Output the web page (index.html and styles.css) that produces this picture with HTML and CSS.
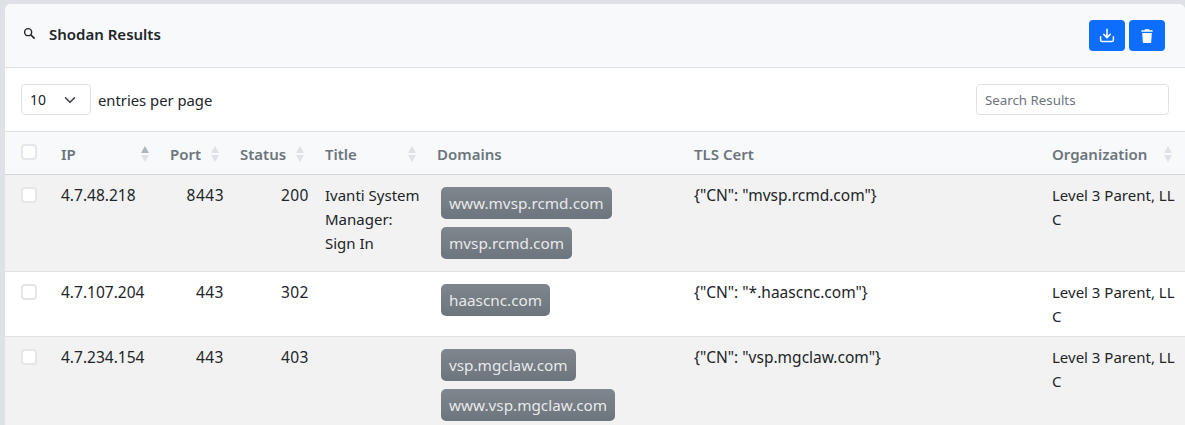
FILE: index.html
```html
<!DOCTYPE html>
<html lang="en">
<head>
<meta charset="utf-8">
<title>Shodan Results</title>
<link rel="stylesheet" href="styles.css">
</head>
<body>
<div class="card">
  <header class="card-header">
    <div class="card-title">
      <svg class="search-icon" viewBox="0 0 24 24" width="13" height="13"><circle cx="9.5" cy="9.5" r="6.5" fill="none" stroke="#212529" stroke-width="2.6"/><path d="M14.5 14.5L21.5 21.5" stroke="#212529" stroke-width="2.8" fill="none"/></svg>
      <h1>Shodan Results</h1>
    </div>
    <div class="actions">
      <button class="btn" type="button" aria-label="Download"><svg viewBox="0 0 16 16" width="16" height="16"><path d="M8 1.2v8.2M4.8 6.400L8 9.600l3.200-3.200" fill="none" stroke="#fff" stroke-width="1.500" stroke-linecap="round" stroke-linejoin="round"/><path d="M1.600 8.700v3.300c0 .9.7 1.600 1.600 1.600h9.600c.9 0 1.600-.7 1.600-1.600V8.700" fill="none" stroke="#fff" stroke-width="1.500" stroke-linecap="round"/></svg></button>
      <button class="btn" type="button" aria-label="Delete"><svg viewBox="0 0 16 16" width="16" height="16"><path d="M6 1.300h4l.5 1h2.600c.4 0 .6.300.6.600v.9H2.300v-.9c0-.3.2-.6.600-.6h2.600z" fill="#fff"/><path d="M3.200 5h9.600l-.6 8.900c0 .6-.5 1-1 1H4.800c-.5 0-1-.4-1-1z" fill="#fff"/></svg></button>
    </div>
  </header>
  <div class="toolbar">
    <div class="per-page">
      <div class="select"><span>10</span><svg viewBox="0 0 16 16" width="12" height="12"><path d="M2 5L8 11l6-6" fill="none" stroke="#343a40" stroke-width="1.900" stroke-linecap="round" stroke-linejoin="round"/></svg></div>
      <span class="per-page-label">entries per page</span>
    </div>
    <div class="search-input">Search Results</div>
  </div>
  <table>
    <colgroup>
      <col class="c-check"><col class="c-ip"><col class="c-port"><col class="c-status"><col class="c-title"><col class="c-domains"><col class="c-tls"><col class="c-org">
    </colgroup>
    <thead>
      <tr>
        <th><span class="check head-check"></span></th>
        <th><div class="th-in">IP<span class="sort active"></span></div></th>
        <th><div class="th-in">Port<span class="sort"></span></div></th>
        <th><div class="th-in">Status<span class="sort"></span></div></th>
        <th><div class="th-in">Title<span class="sort"></span></div></th>
        <th>Domains</th>
        <th>TLS Cert</th>
        <th><div class="th-in">Organization<span class="sort"></span></div></th>
      </tr>
    </thead>
    <tbody>
      <tr class="striped">
        <td><span class="check"></span></td>
        <td>4.7.48.218</td>
        <td class="num">8443</td>
        <td class="num">200</td>
        <td class="narrow">Ivanti System Manager: Sign In</td>
        <td><span class="badge">www.mvsp.rcmd.com</span><span class="badge">mvsp.rcmd.com</span></td>
        <td>{"CN": "mvsp.rcmd.com"}</td>
        <td class="narrow org">Level 3 Parent, LLC</td>
      </tr>
      <tr>
        <td><span class="check"></span></td>
        <td>4.7.107.204</td>
        <td class="num">443</td>
        <td class="num">302</td>
        <td class="narrow"></td>
        <td><span class="badge">haascnc.com</span></td>
        <td>{"CN": "*.haascnc.com"}</td>
        <td class="narrow org">Level 3 Parent, LLC</td>
      </tr>
      <tr class="striped">
        <td><span class="check"></span></td>
        <td>4.7.234.154</td>
        <td class="num">443</td>
        <td class="num">403</td>
        <td class="narrow"></td>
        <td><span class="badge">vsp.mgclaw.com</span><span class="badge">www.vsp.mgclaw.com</span></td>
        <td>{"CN": "vsp.mgclaw.com"}</td>
        <td class="narrow org">Level 3 Parent, LLC</td>
      </tr>
    </tbody>
  </table>
</div>
</body>
</html>
```
FILE: styles.css
```css
* { box-sizing: border-box; }
html, body { margin: 0; height: 100%; overflow: hidden; }
body {
  background: #dee2e6;
  padding: 4px 0 0 5px;
  font-family: "Noto Sans", sans-serif;
  font-size: 15px;
  line-height: 24px;
  color: #212529;
}
.card {
  width: 1180px;
  background: #fff;
  border-radius: 6px 6px 0 0;
}
.card-header {
  height: 64px;
  display: flex;
  align-items: center;
  justify-content: space-between;
  padding: 0 20px 4px 18px;
  background: #f8f9fa;
  border-bottom: 1px solid #dee2e6;
  border-radius: 6px 6px 0 0;
}
.card-title { display: flex; align-items: center; gap: 13px; }
.search-icon { display: block; }
h1 { margin: 0; font-size: 15px; font-weight: 600; line-height: 24px; }
.actions { display: flex; gap: 4px; margin-top: 4px; }
.btn {
  width: 36px;
  height: 31px;
  padding: 0;
  border: 0;
  border-radius: 4px;
  background: #0d6efd;
  display: flex;
  align-items: center;
  justify-content: center;
}
.toolbar {
  height: 64px;
  display: flex;
  align-items: center;
  justify-content: space-between;
  padding: 0 16px;
  border-bottom: 1px solid #dee2e6;
}
.per-page { display: flex; align-items: center; gap: 7px; }
.per-page-label { font-size: 14.800px; }
.select {
  width: 70px;
  height: 31px;
  border: 1px solid #dee2e6;
  border-radius: 4px;
  padding: 0 14px 0 8px;
  display: flex;
  align-items: center;
  justify-content: space-between;
  font-size: 14px;
}
.search-input {
  width: 193px;
  height: 31px;
  border: 1px solid #dee2e6;
  border-radius: 4px;
  padding: 1px 8px 0;
  font-size: 13.300px;
  line-height: 29px;
  color: #6c757d;
}
table {
  width: 1180px;
  table-layout: fixed;
  border-collapse: collapse;
}
.c-check { width: 48px; }
.c-ip { width: 109px; }
.c-port { width: 70px; }
.c-status { width: 85px; }
.c-title { width: 112px; }
.c-domains { width: 257px; }
.c-tls { width: 358px; }
.c-org { width: 141px; }
th {
  height: 42px;
  padding: 3px 8px 0;
  text-align: left;
  font-weight: 600;
  color: #6c757d;
  background: #f8f9fa;
  border-bottom: 1px solid #ced4da;
}
th:first-child, td:first-child { padding-left: 16px; padding-right: 0; }
.th-in { display: flex; align-items: center; justify-content: space-between; padding-right: 5px; }
.sort {
  width: 8px;
  height: 16px;
  display: flex;
  flex-direction: column;
  justify-content: center;
  gap: 2px;
}
.sort::before, .sort::after {
  content: "";
  width: 0;
  height: 0;
  border-left: 4px solid transparent;
  border-right: 4px solid transparent;
}
.sort::before { border-bottom: 7px solid #dee2e6; }
.sort::after { border-top: 7px solid #dee2e6; }
.sort.active::before { border-bottom-color: #adb5bd; }
td {
  padding: 8px;
  vertical-align: top;
  font-size: 15.500px;
  border-bottom: 1px solid #dee2e6;
  overflow-wrap: break-word;
}
.striped td { background: #f2f2f2; }
.num { text-align: right; letter-spacing: .5px; }
.narrow { font-size: 15px; }
.org { word-break: break-all; }
.check {
  display: block;
  width: 16px;
  height: 16px;
  margin-top: 4px;
  background: #fff;
  border: 2px solid #e4e7ea;
  border-radius: 4px;
}
.head-check { margin-top: -4px; }
.badge {
  display: block;
  width: fit-content;
  margin: 4px;
  padding: 4px 8px;
  border-radius: 5px;
  font-size: 15.300px;
  line-height: 24px;
  color: rgba(255,255,255,.85);
  background: linear-gradient(180deg, #7f868d, #6c757d);
}
.badge + .badge { margin-top: 8px; }
```
